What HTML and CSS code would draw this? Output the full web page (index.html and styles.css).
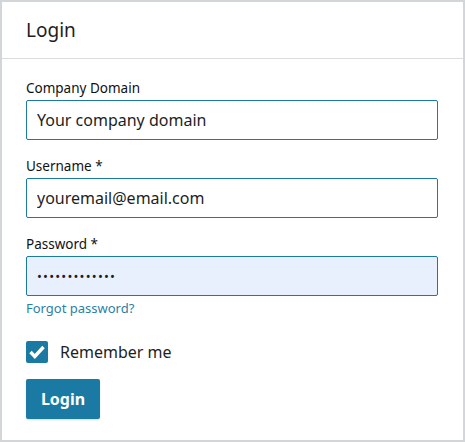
FILE: index.html
```html
<!DOCTYPE html>
<html lang="en">
<head>
    <meta charset="UTF-8">
    <meta name="viewport" content="width=device-width, initial-scale=1.0">
    <title>Login</title>
    <link rel="stylesheet" href="styles.css">
</head>
<body>
    <div class="login-box">
        <div class="login-header">
            <h2>Login</h2>
        </div>
        <form class="login-form">
            <div class="field">
                <label for="domain">Company Domain</label>
                <input type="text" id="domain" value="Your company domain">
            </div>
            <div class="field">
                <label for="username">Username *</label>
                <input type="text" id="username" value="youremail@email.com">
            </div>
            <div class="field">
                <label for="password">Password *</label>
                <input type="password" id="password" class="filled" value="passwordpass1">
            </div>
            <a href="#" class="forgot">Forgot password?</a>
            <label class="remember">
                <span class="check">
                    <svg width="16" height="14" viewBox="0 0 16 14"><path d="M1.5 7 L5.8 11.5 L14.5 2" fill="none" stroke="#fff" stroke-width="3.4"/></svg>
                </span>
                Remember me
            </label>
            <button type="button" class="btn">Login</button>
        </form>
    </div>
</body>
</html>
```

FILE: styles.css
```css
*{
    box-sizing: border-box;
}
body{
    margin: 0;
    font-family: 'Noto Sans', 'Open Sans', sans-serif;
    color: #1e1e1e;
    background: #fff;
}
.login-box{
    width: 465px;
    height: 442px;
    border: 2px solid #d3d6d9;
    background: #fff;
}
.login-header{
    height: 57px;
    border-bottom: 1px solid #dcdcdc;
    display: flex;
    align-items: center;
    padding: 0 24px;
}
.login-header h2{
    margin: 0;
    font-size: 19px;
    font-weight: 400;
}
.login-form{
    padding: 20px 24px 0 24px;
    display: flex;
    flex-direction: column;
}
.field{
    display: flex;
    flex-direction: column;
    margin-bottom: 17px;
}
.field label{
    font-size: 13.5px;
    line-height: 18px;
    margin-bottom: 3px;
    color: #111;
}
.field input{
    height: 40px;
    width: 412px;
    border: 1px solid #1a7aa3;
    border-radius: 2px;
    padding: 0 10px;
    font-family: inherit;
    font-size: 16px;
    color: #1e1e1e;
    outline: none;
}
.field input.filled{
    background: #e8f0fe;
    font-size: 13px;
    letter-spacing: 1.2px;
}
.forgot{
    margin-top: -13px;
    font-size: 13px;
    line-height: 17px;
    color: #2a7fa8;
    text-decoration: none;
    align-self: flex-start;
}
.remember{
    display: flex;
    align-items: center;
    gap: 12px;
    font-size: 16px;
    margin-top: 24px;
}
.check{
    width: 22px;
    height: 22px;
    background: #1a7aa3;
    border-radius: 2px;
    display: flex;
    align-items: center;
    justify-content: center;
}
.btn{
    margin-top: 16px;
    align-self: flex-start;
    width: 74px;
    height: 40px;
    border: none;
    border-radius: 2px;
    background: #1a7aa3;
    color: #fff;
    font-family: inherit;
    font-size: 16px;
    font-weight: 700;
    cursor: pointer;
    box-shadow: 0 1px 2px rgba(0, 0, 0, 0.15);
}
```
